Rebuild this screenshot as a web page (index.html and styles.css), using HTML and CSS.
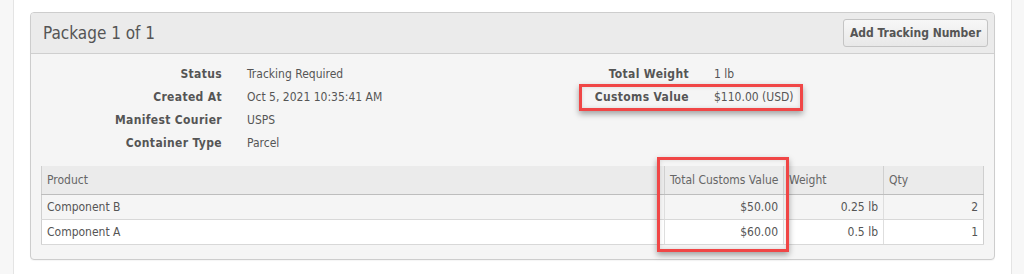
FILE: index.html
```html
<!DOCTYPE html>
<html lang="en">
<head>
<meta charset="utf-8">
<title>Package</title>
<link rel="stylesheet" href="styles.css">
</head>
<body>
<div class="page">
  <aside class="rail rail-left"></aside>
  <main class="main">
    <section class="panel">
      <header class="panel-head">
        <h2 class="panel-title">Package 1 of 1</h2>
        <button class="btn" type="button">Add Tracking Number</button>
      </header>
      <div class="panel-body">
        <div class="info">
          <dl class="info-col">
            <dt>Status</dt><dd>Tracking Required</dd>
            <dt>Created At</dt><dd>Oct 5, 2021 10:35:41 AM</dd>
            <dt>Manifest Courier</dt><dd>USPS</dd>
            <dt>Container Type</dt><dd>Parcel</dd>
          </dl>
          <dl class="info-col">
            <dt>Total Weight</dt><dd>1 lb</dd>
            <dt>Customs Value</dt><dd>$110.00 (USD)</dd>
          </dl>
        </div>
        <table class="items">
          <colgroup>
            <col class="c-product">
            <col class="c-value">
            <col class="c-weight">
            <col class="c-qty">
          </colgroup>
          <thead>
            <tr><th>Product</th><th>Total Customs Value</th><th>Weight</th><th>Qty</th></tr>
          </thead>
          <tbody>
            <tr><td>Component B</td><td class="num">$50.00</td><td class="num">0.25 lb</td><td class="num">2</td></tr>
            <tr><td>Component A</td><td class="num">$60.00</td><td class="num">0.5 lb</td><td class="num">1</td></tr>
          </tbody>
        </table>
      </div>
    </section>
  </main>
  <aside class="rail rail-right"></aside>
  <div class="mark mark-value"></div>
  <div class="mark mark-column"></div>
</div>
</body>
</html>
```
FILE: styles.css
```css
* { box-sizing: border-box; }
html, body { margin: 0; padding: 0; background: #fff; }
body {
  font-family: "DejaVu Sans Condensed", "DejaVu Sans", sans-serif;
  font-stretch: condensed;
  font-size: 12px;
  color: #555;
}
.page {
  position: relative;
  display: flex;
  width: 1024px;
  height: 274px;
  overflow: hidden;
}
.rail {
  width: 14px;
  flex: none;
  background: #f7f7f7;
}
.rail-left { border-right: 1px solid #e4e4e4; }
.rail-right { border-left: 1px solid #e4e4e4; }
.main {
  flex: 1;
  padding: 12px 16px 0 16px;
}
.panel {
  border: 1px solid #cdcdcd;
  border-radius: 4px;
  background: #f5f5f5;
  box-shadow: 0 1px 1px rgba(0,0,0,0.04);
}
.panel-head {
  display: flex;
  align-items: center;
  justify-content: space-between;
  height: 41px;
  padding: 0 6px 0 12px;
  background: #ebebeb;
  border-bottom: 1px solid #cfcfcf;
  border-radius: 3px 3px 0 0;
}
.panel-title {
  margin: 0;
  font-size: 17px;
  font-weight: normal;
  color: #555;
}
.btn {
  height: 28px;
  padding: 0 6px;
  font-family: inherit;
  font-stretch: condensed;
  font-size: 12px;
  font-weight: bold;
  color: #555;
  background: linear-gradient(#f7f7f7, #e8e8e8);
  border: 1px solid #c4c4c4;
  border-radius: 3px;
}
.panel-body {
  padding: 8px 10px 14px 10px;
}
.info {
  display: flex;
}
.info-col {
  display: grid;
  grid-template-columns: 181px auto;
  grid-auto-rows: 23px;
  column-gap: 25px;
  align-content: start;
  align-items: center;
  margin: 0;
  width: 467px;
}
.info-col dt {
  text-align: right;
  font-weight: bold;
  letter-spacing: 0.35px;
  color: #555;
}
.info-col dd { margin: 0; }
.items {
  margin-top: 12px;
  width: 942px;
  table-layout: fixed;
  border-collapse: collapse;
  background: #fff;
}
.c-product { width: 623px; }
.c-value { width: 119px; }
.c-weight { width: 100px; }
.c-qty { width: 100px; }
.items th, .items td {
  padding: 0 5px;
  text-align: left;
  font-weight: normal;
  white-space: nowrap;
}
.items th {
  height: 28px;
  background: #ebebeb;
  border: 1px solid #d0d0d0;
  border-top: 0;
  border-bottom: 1px solid #bdbdbd;
  color: #666;
}
.items th:first-child { border-left: 1px solid #cfcfcf; }
.items td {
  height: 25px;
  border-left: 1px solid #dedede;
  border-right: 1px solid #dedede;
  border-bottom: 1px solid #d8d8d8;
}
.items tbody tr:first-child td { background: #f5f5f5; }
.items td:first-child { border-left: 1px solid #cfcfcf; }
.items td:last-child, .items th:last-child { border-right: 1px solid #cfcfcf; }
.items td.num { text-align: right; }
.mark {
  position: absolute;
  border: 3px solid #f04646;
  box-shadow: 0 3px 6px rgba(0,0,0,0.35), inset 0 0 4px rgba(0,0,0,0.12);
  pointer-events: none;
}
.mark-value { left: 579px; top: 84px; width: 224px; height: 27px; }
.mark-column { left: 657px; top: 157px; width: 132px; height: 95px; }
```
